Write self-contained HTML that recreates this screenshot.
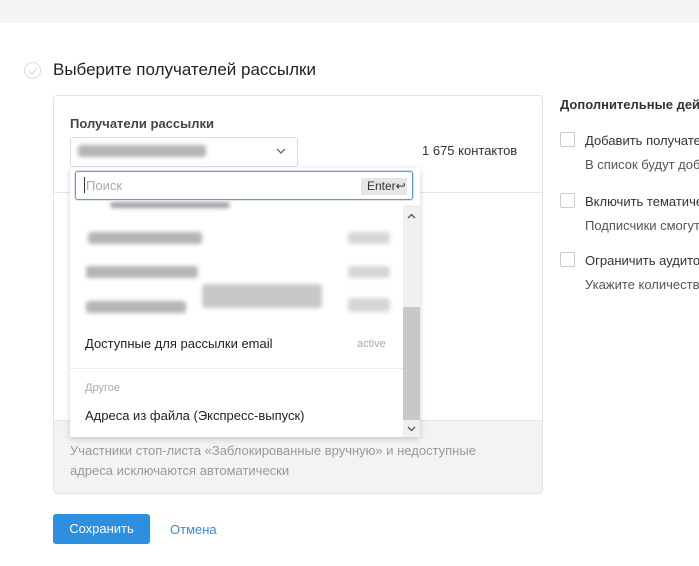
<!DOCTYPE html><html><head><meta charset="utf-8"><style>
html,body{margin:0;width:699px;height:566px;overflow:hidden}
body{background:#fff;font-family:"Liberation Sans","DejaVu Sans",sans-serif;color:#333}
#w{position:relative;width:699px;height:566px;overflow:hidden}
.a{position:absolute;white-space:nowrap}
.blob{position:absolute;background:#777;filter:blur(2px);opacity:.55;border-radius:3px}
.cb{position:absolute;width:13px;height:13px;border:1px solid #ccc;border-radius:2px;background:#fff}
</style></head><body><div id="w">
<div class="a" style="left:0;top:0;width:699px;height:23px;background:#f4f4f4"></div>
<div class="a" style="left:24px;top:62px;width:15px;height:15px;border:1px solid #ddd;border-radius:50%"></div>
<svg class="a" style="left:24px;top:62px" width="17" height="17"><path d="M5 9l3 3 5-6" stroke="#ddd" stroke-width="1.2" fill="none"/></svg>
<div class="a" style="left:53px;top:60px;font-size:17px;color:#222">Выберите получателей рассылки</div>
<div class="a" style="left:53px;top:95px;width:488px;height:397px;border:1px solid #e2e2e2;border-radius:4px;background:#fff;overflow:hidden">
 <div class="a" style="left:0;top:96px;width:488px;height:1px;background:#e6e6e6"></div>
 <div class="a" style="left:0;top:324px;width:488px;height:73px;background:#f2f3f4;border-top:1px solid #e6e6e6"></div>
</div>
<div class="a" style="left:70px;top:116px;font-size:13px;font-weight:bold;color:#444">Получатели рассылки</div>
<div class="a" style="left:70px;top:137px;width:226px;height:28px;border:1px solid #ddd;border-radius:3px;background:#fff"></div>
<div class="blob" style="left:78px;top:145px;width:128px;height:12px"></div>
<svg class="a" style="left:276px;top:147px" width="10" height="8"><path d="M1 2l4 4 4-4" stroke="#666" stroke-width="1.3" fill="none"/></svg>
<div class="a" style="left:422px;top:143px;font-size:13px;color:#333">1 675 контактов</div>
<div class="a" style="left:256px;top:310px;font-size:13px;color:#444">много писем</div>
<div class="a" style="left:256px;top:368px;font-size:13px;color:#444">в списке на</div>
<div class="a" style="left:70px;top:441px;font-size:13px;color:#999;line-height:20px">Участники стоп-листа «Заблокированные вручную» и недоступные<br>адреса исключаются автоматически</div>
<div class="a" style="left:70px;top:168px;width:350px;height:269px;background:#fff;box-shadow:0 2px 6px rgba(0,0,0,.18);overflow:hidden">
 <div class="a" style="left:333px;top:37px;width:17px;height:232px;background:#f0f0f0"></div>
 <div class="a" style="left:333px;top:139px;width:17px;height:113px;background:#c8c8c8"></div>
 <svg class="a" style="left:337px;top:45px" width="9" height="7"><path d="M1 5l3.5-3.5L8 5" stroke="#555" stroke-width="1.3" fill="none"/></svg>
 <svg class="a" style="left:337px;top:257px" width="9" height="7"><path d="M1 2l3.5 3.5L8 2" stroke="#555" stroke-width="1.3" fill="none"/></svg>
 <div class="blob" style="left:40px;top:34px;width:120px;height:6px;opacity:.7"></div>
 <div class="blob" style="left:18px;top:64px;width:114px;height:12px"></div>
 <div class="blob" style="left:278px;top:64px;width:42px;height:12px;opacity:.3"></div>
 <div class="blob" style="left:16px;top:98px;width:112px;height:12px"></div>
 <div class="blob" style="left:278px;top:98px;width:42px;height:12px;opacity:.3"></div>
 <div class="blob" style="left:16px;top:133px;width:100px;height:12px"></div>
 <div class="blob" style="left:132px;top:116px;width:120px;height:24px;opacity:.4"></div>
 <div class="blob" style="left:278px;top:130px;width:42px;height:14px;opacity:.3"></div>
 <div class="a" style="left:15px;top:168px;font-size:13px;color:#222">Доступные для рассылки email</div>
 <div class="a" style="left:287px;top:170px;font-size:11px;color:#aaa">active</div>
 <div class="a" style="left:0;top:200px;width:333px;height:1px;background:#ececec"></div>
 <div class="a" style="left:15px;top:214px;font-size:11px;color:#aaa">Другое</div>
 <div class="a" style="left:15px;top:240px;font-size:13px;color:#222">Адреса из файла (Экспресс-выпуск)</div>
</div>
<div class="a" style="left:75px;top:171px;width:336px;height:27px;border:1.5px solid #5c9bd6;border-radius:3px;background:#fff;box-shadow:0 0 0 1px #d5e6f6"></div>
<div class="a" style="left:84px;top:177px;width:1px;height:16px;background:#333"></div>
<div class="a" style="left:86px;top:178px;font-size:13px;color:#aaa">Поиск</div>
<div class="a" style="left:361px;top:178px;width:46px;height:17px;background:#e6e6e6;font-size:12px;color:#333;line-height:17px;text-indent:6px">Enter↩</div>
<div class="a" style="left:560px;top:97px;font-size:13px;font-weight:bold;color:#333">Дополнительные действия</div>
<div class="cb" style="left:560px;top:132px"></div>
<div class="a" style="left:585px;top:133px;font-size:13px">Добавить получателей</div>
<div class="a" style="left:585px;top:157px;font-size:13px;color:#555">В список будут добавлены</div>
<div class="cb" style="left:560px;top:193px"></div>
<div class="a" style="left:585px;top:194px;font-size:13px">Включить тематические</div>
<div class="a" style="left:585px;top:218px;font-size:13px;color:#555">Подписчики смогут</div>
<div class="cb" style="left:560px;top:252px"></div>
<div class="a" style="left:585px;top:253px;font-size:13px">Ограничить аудиторию</div>
<div class="a" style="left:585px;top:277px;font-size:13px;color:#555">Укажите количество</div>
<div class="a" style="left:53px;top:514px;width:97px;height:30px;background:#2c8fe0;border-radius:3px;color:#fff;font-size:13px;line-height:30px;text-align:center">Сохранить</div>
<div class="a" style="left:170px;top:522px;font-size:13px;color:#3a8ad6">Отмена</div>
</div></body></html>
